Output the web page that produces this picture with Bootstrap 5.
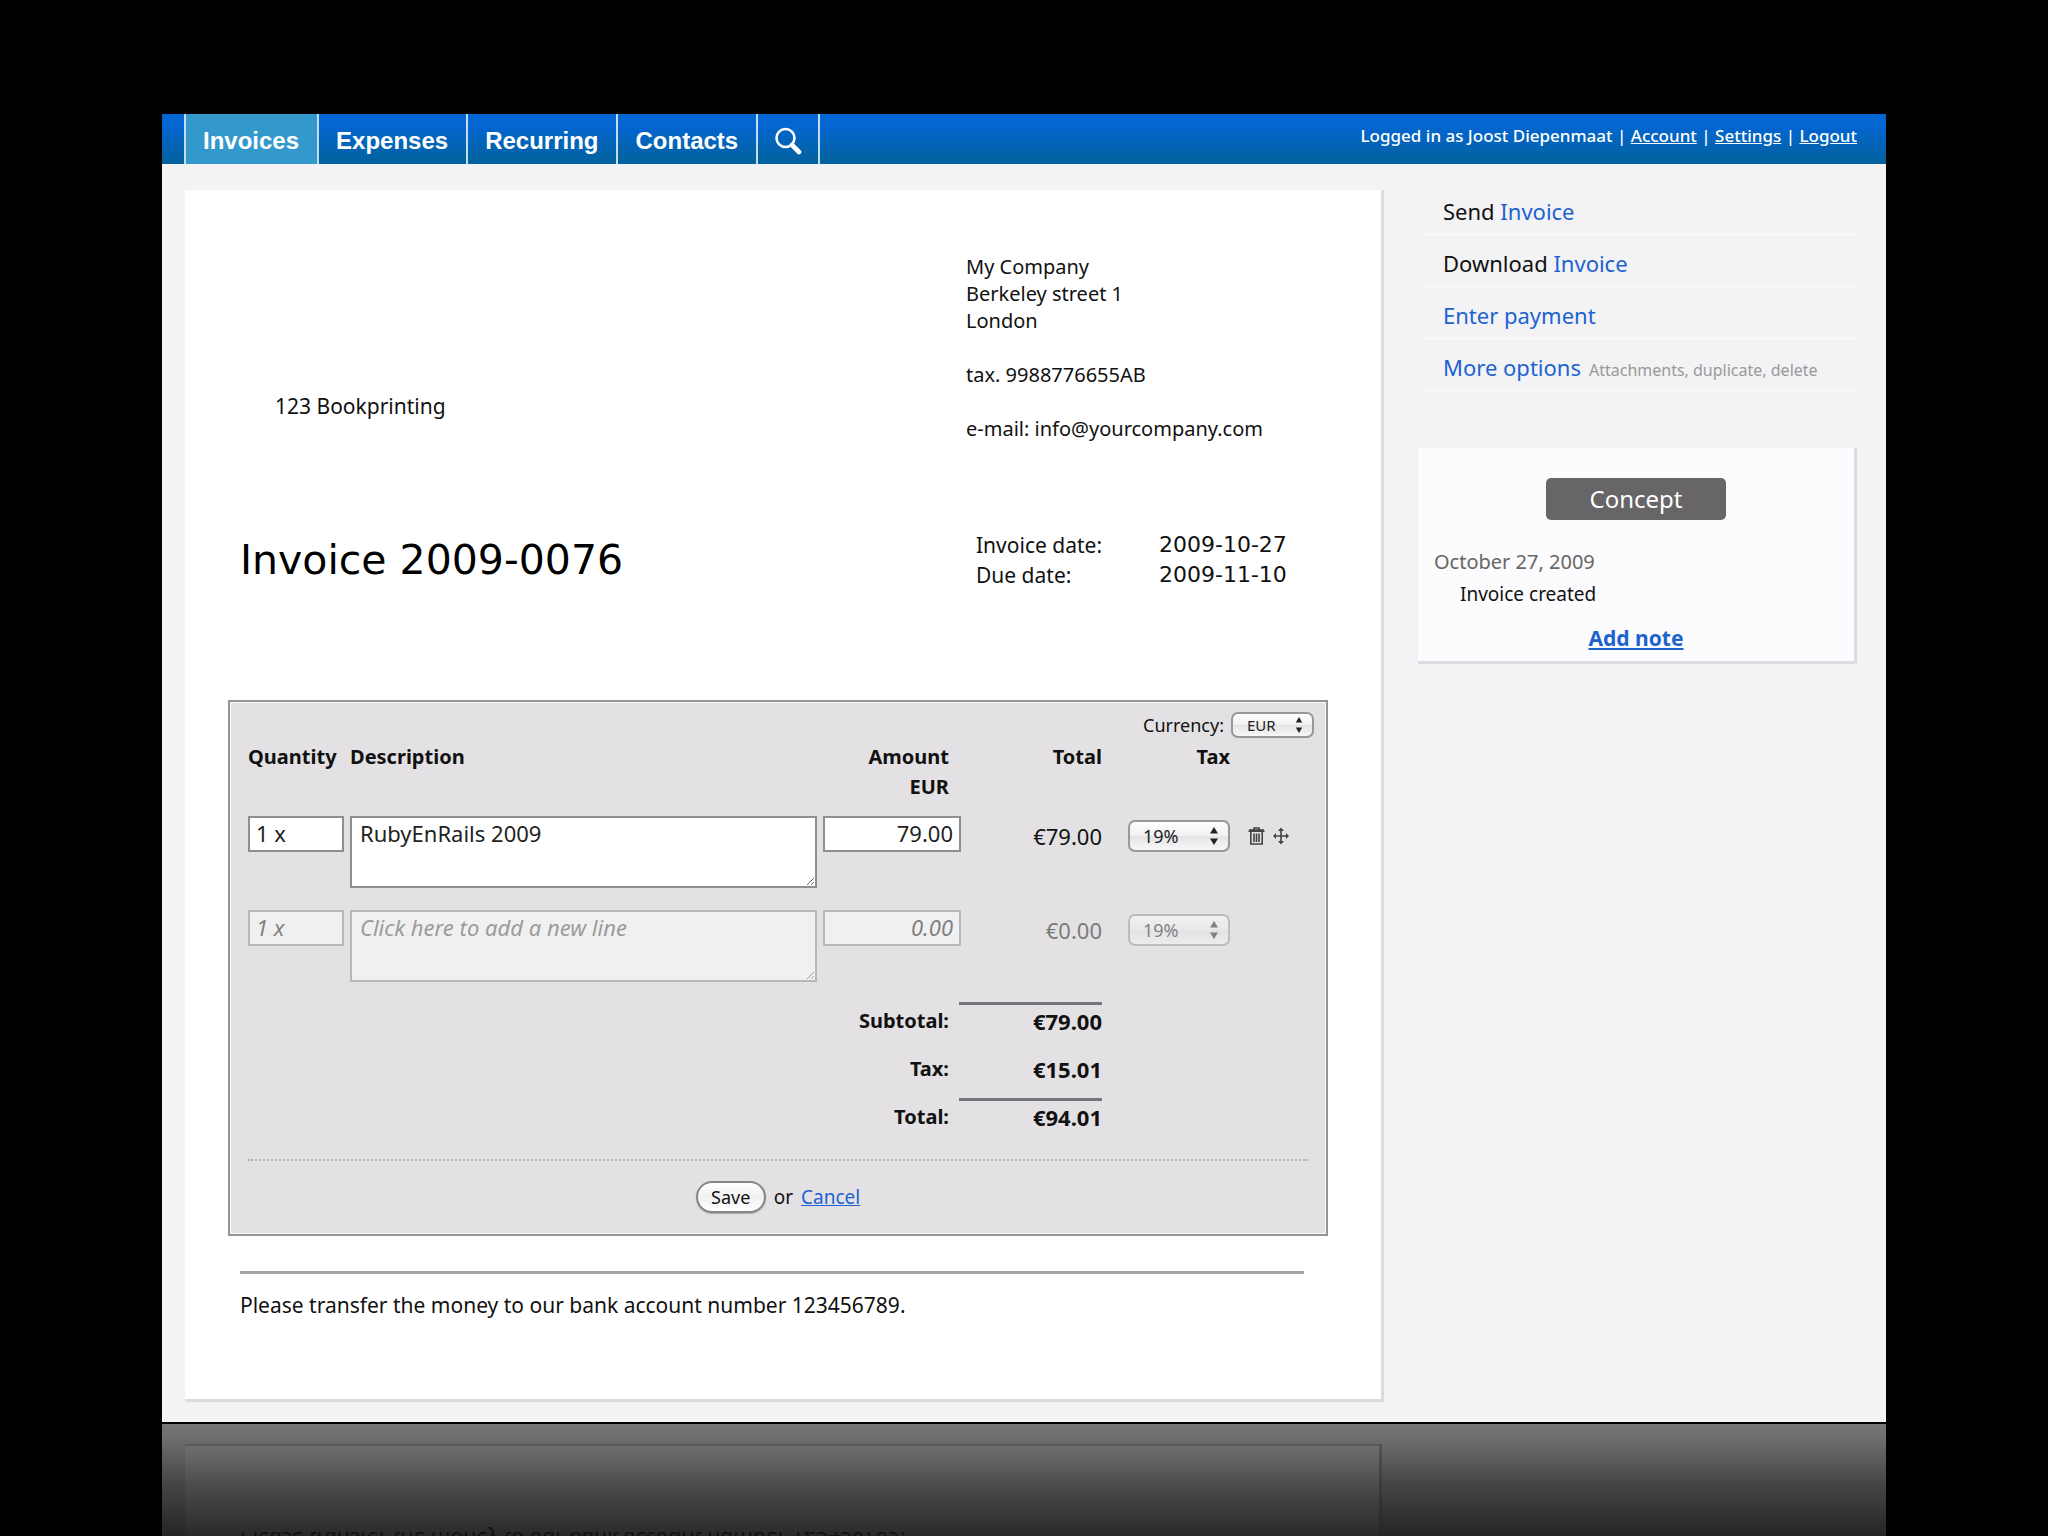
<!DOCTYPE html>
<html lang="en">
<head>
<meta charset="utf-8">
<meta name="viewport" content="width=device-width, initial-scale=1">
<title>Invoice 2009-0076</title>
<link href="https://cdn.jsdelivr.net/npm/bootstrap@5.3.0/dist/css/bootstrap.min.css" rel="stylesheet">
<style>
  body { background: #000; color: #111; font-family: "Noto Sans", sans-serif; font-size: 20px; line-height: 30px; }
  a { color: #1c63cf; }
  .stage { padding: 114px 162px 0; height: 100vh; min-height: 1536px; overflow: hidden; }
  .app { background: #f3f2f5; }

  /* top bar */
  .topbar { background: linear-gradient(#0366d3 20%, #03629c); height: 50px; padding: 0 29px 0 22px; }
  .topbar .tabs { border-left: 2px solid #c4dcf0; }
  .topbar .tabs a { display: flex; align-items: center; height: 50px; padding: 4px 18px 0 17px; border-right: 2px solid #c4dcf0;
    color: #fff; font: bold 24px/28px "Liberation Sans", sans-serif; text-decoration: none; }
  .topbar .tabs a.active { background: #3399cc; }
  .topbar .tabs a.find { padding: 4px 16px 0; }
  .session { color: #fff; font-size: 17px; font-weight: 500; line-height: 24px; padding-top: 10px; }
  .session a { color: #fff; }

  .body-area { padding: 26px 29px 20px 23px; gap: 34px; }
  .sheet { background: #fff; border-right: 3px solid #dcdbde; border-bottom: 3px solid #dcdbde; padding: 63px 53px 79px 43px; min-width: 0; }
  .inset { padding: 0 24px 0 12px; }
  .right-col { width: 338px; flex: none; }
  .customer { padding: 138px 0 0 35px; font-size: 21px; }
  .company { line-height: 27px; }
  .doc-head { margin-top: 88px; }
  .doc-head h1 { font: 41px/60px "DejaVu Sans", sans-serif; margin: 0; color: #000; }
  .doc-head dl { padding-left: 10px; display: grid; grid-template-columns: 183px 1fr; margin: 0; font-size: 21px; }
  .doc-head dt { font-weight: 400; }
  .doc-head dd { margin: 0; font: 22px/30px "DejaVu Sans", sans-serif; }

  /* line item editor */
  .editor { margin-top: 110px; background: #e3e1e3; border: 2px solid #949396; box-shadow: inset 0 0 0 1px #f8f8f8; padding: 10px 12px 21px 18px; }
  .currency { gap: 7px; font-size: 18px; line-height: 26px; }
  .items { width: calc(100% - 6px); table-layout: fixed; border-collapse: separate; border-spacing: 0; margin-top: 4px; }
  .items th, .items td { padding: 0; vertical-align: top; }
  .items thead tr { height: 74px; }
  .items thead .num { padding-right: 10px; text-align: right; }
  .items .line { height: 94px; }
  .items .line.blank { height: 92px; }
  .blank input, .blank textarea, .blank .mac-select, .blank output { opacity: .5; }
  .blank input, .blank textarea { font-style: italic; color: #555; }
  .blank textarea::placeholder { color: #555; opacity: 1; }
  .items input, .items textarea { display: block; border: 2px solid #8f8e90; border-radius: 0; background: #fff; color: #222;
    font-family: inherit; font-size: 22px; line-height: 28px; padding: 0 6px; outline: 0; }
  .items input { height: 36px; padding-bottom: 2px; }
  .items .qty { width: 96px; }
  .items .amt { width: 138px; text-align: right; }
  .items textarea { width: calc(100% - 6px); height: 72px; padding: 1px 8px; }
  .items .sum { text-align: right; font-size: 22px; padding-top: 5px; }
  .items .taxcell { padding: 4px 0 0 26px; }
  .totals th, .totals td { text-align: right; height: 48px; font-weight: 700; }
  .totals th { padding: 4px 10px 0 0 !important; }
  .totals td { font-size: 22px; border-top: 3px solid transparent; padding-top: 1px !important; }
  .totals .ruled { border-top-color: #77767a; }

  .mac-select { position: relative; display: block; width: 102px; }
  .mac-select select { appearance: none; display: block; width: 100%; height: 32px; border: 2px solid #98979a; border-radius: 7px;
    background: linear-gradient(#fff, #f1f0f2 48%, #e4e3e5 52%, #f7f7f8); color: #222; font: 18px/26px "Noto Sans", sans-serif; padding: 0 0 0 13px; opacity: 1; }
  .mac-select svg { position: absolute; right: 11px; top: 50%; margin-top: -9px; pointer-events: none; }
  .mac-select.tiny { width: 83px; }
  .mac-select.tiny select { height: 26px; font-size: 15px; line-height: 20px; padding-left: 14px; }
  .tool { border: 0; background: none; padding: 0; display: block; line-height: 0; }
  .actions { padding: 11px 0 0 8px !important; }

  .form-foot { border-top: 2px dotted #b4b3b6; margin: 13px 6px 0 0; padding-top: 20px; gap: 8px; line-height: 32px; font-size: 19px; }
  .save { height: 32px; width: 70px; border: 2px solid #858487; border-radius: 16px; background: linear-gradient(#fff, #f0f0f1 50%, #fff);
    font-size: 18px; line-height: 26px; padding: 0; color: #111; box-shadow: 0 1px 1px #aaa; }
  .terms { border-top: 3px solid #a5a3a6; margin: 35px 24px 0 12px; padding-top: 16px; font-size: 21px; }

  /* sidebar */
  .side { width: 439px; flex: none; }
  .side ul { margin: -6px 2px 0 5px; font-size: 22px; }
  .side li { height: 52px; padding: 12px 0 0 20px; border-bottom: 3px solid #f8f8f9; }
  .side li a { text-decoration: none; }
  .side li span { font-size: 16px; color: #999; margin-left: 8px; }
  .status-box { background: #fcfbfd; border-right: 3px solid #dddce0; border-bottom: 3px solid #dddce0; margin-top: 56px; padding: 30px 16px 8px; }
  .state { display: block; width: 180px; margin: 0 auto; background: #676567; color: #fff; border-radius: 5px; font-size: 24px; line-height: 42px; text-align: center; }
  .when { color: #666; margin-top: 27px; }
  .what { font-size: 19px; padding-left: 26px; margin-top: 2px; }
  .note { display: block; text-align: center; font-weight: 700; font-size: 21px; margin-top: 14px; }

  /* mirrored floor under the window */
  .floor { margin-top: 2px; height: 112px; overflow: hidden; background: linear-gradient(#777577, #6a686b 18%, #454346 55%, #262426); padding: 20px 504px 0 23px; }
  .floor div { height: 92px; border-top: 2px solid #5b595c; border-right: 3px solid rgba(30,28,31,.35); background: linear-gradient(rgba(255,255,255,.05), rgba(255,255,255,.02)); padding: 79px 0 0 55px; overflow: hidden; }
  .floor p { transform: scaleY(-1); font-size: 21px; color: #111; margin: 0; white-space: nowrap; }
</style>
<script src="https://cdn.jsdelivr.net/npm/bootstrap@5.3.0/dist/js/bootstrap.bundle.min.js"></script>
</head>
<body>
<div class="stage">
  <div class="app">
    <header class="topbar d-flex justify-content-between">
      <nav class="tabs d-flex" aria-label="Main">
        <a class="active" href="#">Invoices</a>
        <a href="#">Expenses</a>
        <a href="#">Recurring</a>
        <a href="#">Contacts</a>
        <a class="find" href="#" aria-label="Search">
          <svg width="28" height="28" viewBox="0 0 28 28" fill="none" stroke="#fff"><circle cx="11.5" cy="11" r="9" stroke-width="2.6"/><path d="M18 18l7 7" stroke-width="4.6" stroke-linecap="round"/></svg>
        </a>
      </nav>
      <div class="session">Logged in as Joost Diepenmaat | <a href="#">Account</a> | <a href="#">Settings</a> | <a href="#">Logout</a></div>
    </header>

    <div class="body-area d-flex align-items-start">
      <main class="sheet flex-grow-1">
        <div class="inset d-flex justify-content-between">
          <div class="customer">123 Bookprinting</div>
          <address class="company right-col mb-0">My Company<br>Berkeley street 1<br>London<br><br>tax. 9988776655AB<br><br>e-mail: info@yourcompany.com</address>
        </div>
        <div class="doc-head inset d-flex justify-content-between">
          <h1>Invoice 2009-0076</h1>
          <dl class="right-col">
            <dt>Invoice date:</dt><dd>2009-10-27</dd>
            <dt>Due date:</dt><dd>2009-11-10</dd>
          </dl>
        </div>

        <form class="editor">
          <div class="currency d-flex justify-content-end">
            <label for="cur">Currency:</label>
            <span class="mac-select tiny">
              <select id="cur"><option>EUR</option></select>
              <svg width="8" height="18" viewBox="0 0 8 18" fill="#222"><path d="M4 1l3.200 5.500H.8zM4 17l3.200-5.500H.8z"/></svg>
            </span>
          </div>
          <table class="items">
            <colgroup><col style="width:102px"><col><col style="width:136px"><col style="width:143px"><col style="width:138px"><col style="width:68px"></colgroup>
            <thead>
              <tr><th>Quantity</th><th>Description</th><th class="num">Amount<br>EUR</th><th class="num pe-0">Total</th><th class="num">Tax</th><th></th></tr>
            </thead>
            <tbody>
              <tr class="line">
                <td><input class="qty" type="text" value="1 x" aria-label="Quantity"></td>
                <td><textarea aria-label="Description">RubyEnRails 2009</textarea></td>
                <td><input class="amt" type="text" value="79.00" aria-label="Amount"></td>
                <td class="sum"><output>€79.00</output></td>
                <td class="taxcell"><span class="mac-select"><select aria-label="Tax"><option>19%</option></select>
                  <svg width="10" height="18" viewBox="0 0 10 18" fill="#222"><path d="M5 0l4 6.500H1zM5 18l4-6.500H1z"/></svg></span></td>
                <td class="actions"><div class="d-flex gap-2">
                  <button class="tool" type="button" aria-label="Delete line"><svg width="17" height="18" viewBox="0 0 17 18" fill="none" stroke="#444" stroke-width="1.600"><path d="M.5 4.200h16M1 3h15M6 2.600V1h5v1.600M2.800 4.500V17h11.400V4.500M6 6.500v8.500M8.500 6.500v8.500M11 6.500v8.500"/></svg></button>
                  <button class="tool" type="button" aria-label="Move line"><svg width="16" height="18" viewBox="0 0 16 18" fill="#444"><path d="M7.200 4h1.600v4.200H13V6l3 3-3 3V9.800H8.800V14H11l-3 3.500L5 14h2.200V9.800H3V12L0 9l3-3v2.200h4.200V4H5L8 .5 11 4z"/></svg></button>
                </div></td>
              </tr>
              <tr class="line blank">
                <td><input class="qty" type="text" value="1 x" aria-label="New quantity"></td>
                <td><textarea placeholder="Click here to add a new line" aria-label="New description"></textarea></td>
                <td><input class="amt" type="text" value="0.00" aria-label="New amount"></td>
                <td class="sum"><output>€0.00</output></td>
                <td class="taxcell"><span class="mac-select"><select aria-label="New tax"><option>19%</option></select>
                  <svg width="10" height="18" viewBox="0 0 10 18" fill="#222"><path d="M5 0l4 6.500H1zM5 18l4-6.500H1z"/></svg></span></td>
                <td></td>
              </tr>
            </tbody>
            <tfoot class="totals">
              <tr><th colspan="3" scope="row">Subtotal:</th><td class="ruled">€79.00</td></tr>
              <tr><th colspan="3" scope="row">Tax:</th><td>€15.01</td></tr>
              <tr><th colspan="3" scope="row">Total:</th><td class="ruled">€94.01</td></tr>
            </tfoot>
          </table>
          <div class="form-foot d-flex justify-content-center">
            <button class="save" type="submit">Save</button><span>or</span><a href="#">Cancel</a>
          </div>
        </form>
        <p class="terms mb-0">Please transfer the money to our bank account number 123456789.</p>
      </main>

      <aside class="side">
        <ul class="list-unstyled">
          <li>Send <a href="#">Invoice</a></li>
          <li>Download <a href="#">Invoice</a></li>
          <li><a href="#">Enter payment</a></li>
          <li><a href="#">More options</a><span>Attachments, duplicate, delete</span></li>
        </ul>
        <section class="status-box">
          <strong class="state fw-normal">Concept</strong>
          <div class="when">October 27, 2009</div>
          <div class="what">Invoice created</div>
          <a class="note" href="#">Add note</a>
        </section>
      </aside>
    </div>
  </div>
  <div class="floor" aria-hidden="true"><div><p>Please transfer the money to our bank account number 123456789.</p></div></div>
</div>
</body>
</html>
